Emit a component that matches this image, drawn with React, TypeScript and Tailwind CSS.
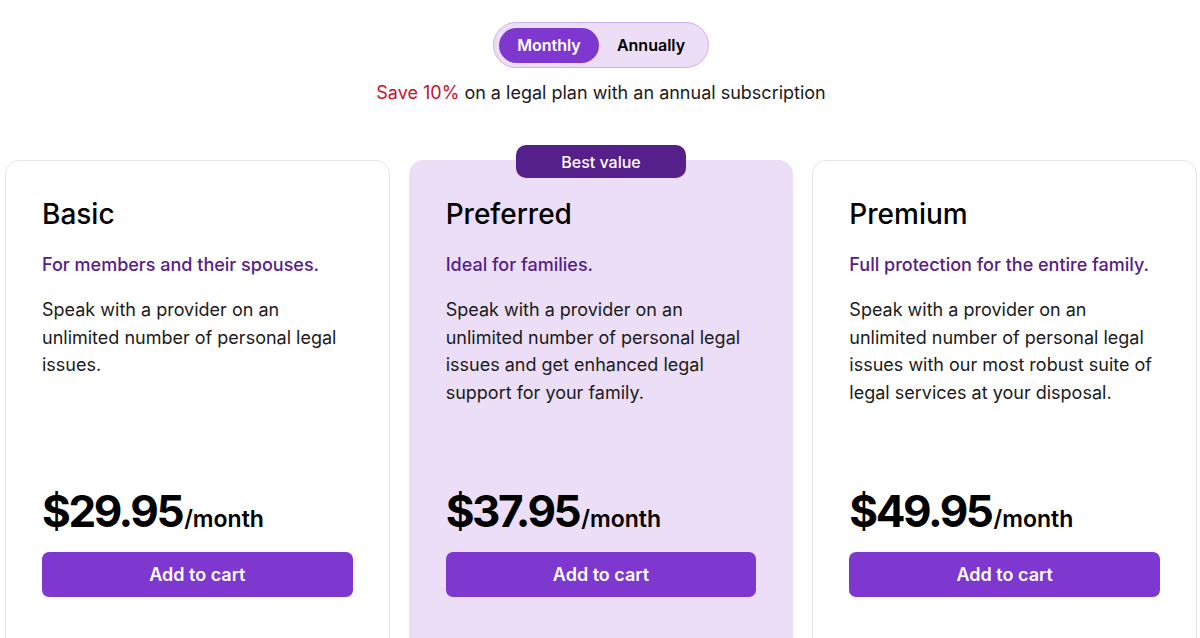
import { useState } from 'react';

type Plan = {
  name: string;
  tagline: string;
  description: string;
  price: string;
  featured?: boolean;
};

const plans: Plan[] = [
  {
    name: 'Basic',
    tagline: 'For members and their spouses.',
    description: 'Speak with a provider on an unlimited number of personal legal issues.',
    price: '$29.95',
  },
  {
    name: 'Preferred',
    tagline: 'Ideal for families.',
    description:
      'Speak with a provider on an unlimited number of personal legal issues and get enhanced legal support for your family.',
    price: '$37.95',
    featured: true,
  },
  {
    name: 'Premium',
    tagline: 'Full protection for the entire family.',
    description:
      'Speak with a provider on an unlimited number of personal legal issues with our most robust suite of legal services at your disposal.',
    price: '$49.95',
  },
];

function PlanCard({ plan }: { plan: Plan }) {
  return (
    <div
      className={`relative flex flex-col rounded-[14px] border px-9 pt-9 pb-[72px] ${
        plan.featured ? 'bg-[#ebdef6] border-[#ebdef6]' : 'bg-white border-[#e6e6e6]'
      }`}
    >
      {plan.featured && (
        <div className="absolute -top-[16px] left-1/2 -translate-x-1/2 w-[170px] h-[33px] rounded-[10px] bg-[#55208a] flex items-center justify-center text-white text-[16px] font-medium">
          Best value
        </div>
      )}

      <h2 className="text-[28px] leading-[35px] font-medium text-black">{plan.name}</h2>
      <p className="mt-[19px] text-[18px] leading-[27px] font-medium text-[#55208a]">{plan.tagline}</p>
      <p className="mt-[18px] h-[193px] text-[18px] leading-[27.5px] text-[#1a1a1a]">{plan.description}</p>

      <div className="flex items-baseline leading-none">
        <span className="text-[44px] font-bold tracking-[-0.055em] text-black">{plan.price}</span>
        <span className="ml-[2px] text-[23px] font-semibold text-black">/month</span>
      </div>

      <button className="mt-[19px] h-[45px] w-full rounded-[7px] bg-[#7e38d0] text-white text-[18px] font-semibold">
        Add to cart
      </button>
    </div>
  );
}

export default function App() {
  const [billing, setBilling] = useState<'monthly' | 'annually'>('monthly');

  return (
    <div
      className="h-screen bg-white pt-[22px] overflow-hidden"
      style={{ fontFamily: 'Inter, "Noto Sans", sans-serif' }}
    >
      {/* 切り替えトグル */}
      <div className="flex justify-center pl-[2px]">
        <div className="flex items-center h-[46px] rounded-full border border-[#cfb0ec] bg-[#ebdef6] p-[5px]">
          <button
            onClick={() => setBilling('monthly')}
            className={`h-[35px] w-[100px] rounded-full text-[16px] font-semibold ${
              billing === 'monthly' ? 'bg-[#7e38d0] text-white' : 'text-black'
            }`}
          >
            Monthly
          </button>
          <button
            onClick={() => setBilling('annually')}
            className={`h-[35px] w-[104px] rounded-full text-[16px] font-semibold ${
              billing === 'annually' ? 'bg-[#7e38d0] text-white' : 'text-black'
            }`}
          >
            Annually
          </button>
        </div>
      </div>

      <p className="mt-[11px] text-center text-[18px] leading-[27px] text-[#1a1a1a] pl-[2px]">
        <span className="text-[#c8102e]">Save 10%</span> on a legal plan with an annual subscription
      </p>

      {/* プラン一覧 */}
      <div className="mt-[54px] grid grid-cols-3 gap-[19px] pl-[5px] pr-[3px]">
        {plans.map((plan) => (
          <PlanCard key={plan.name} plan={plan} />
        ))}
      </div>
    </div>
  );
}
